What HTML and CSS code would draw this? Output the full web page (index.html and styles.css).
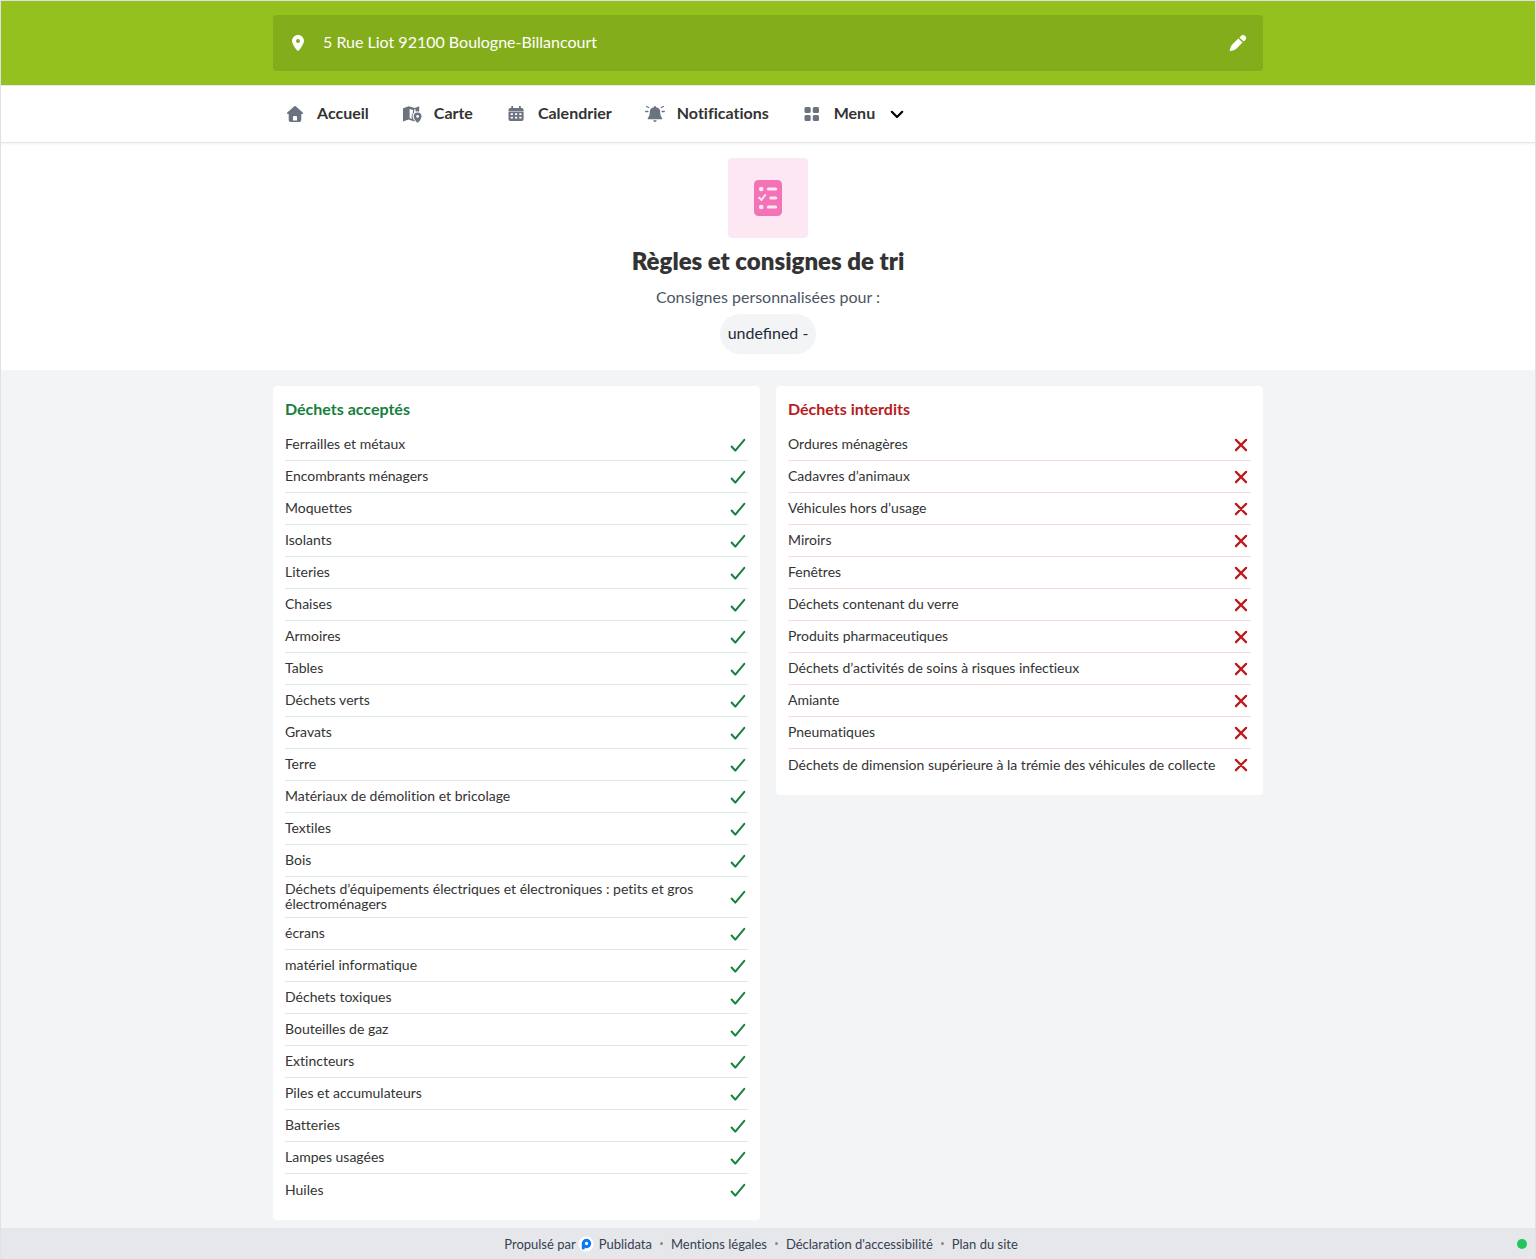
FILE: index.html
```html
<!DOCTYPE html>
<html lang="fr">
<head>
  <meta charset="utf-8">
  <meta name="viewport" content="width=device-width, initial-scale=1">
  <title>Règles et consignes de tri</title>
  <link rel="stylesheet" href="styles.css">
</head>
<body>
  <svg class="sprite" aria-hidden="true">
    <symbol id="check" viewBox="0 0 20 20"><path d="M3.600 11.500 7.300 15.600 16.300 4.800" fill="none" stroke="currentColor" stroke-width="2" stroke-linecap="round" stroke-linejoin="round"/></symbol>
    <symbol id="cross" viewBox="0 0 20 20"><path d="M4.900 4.900 15.100 15.100M15.100 4.900 4.900 15.100" fill="none" stroke="currentColor" stroke-width="2.200" stroke-linecap="round"/></symbol>
  </svg>

  <header class="topbar">
    <button class="address container" type="button">
      <svg class="icon" viewBox="0 0 20 20" aria-hidden="true"><path fill="currentColor" fill-rule="evenodd" transform="translate(4 2) scale(.03125)" d="M215.7 499.2C267 435 384 279.4 384 192C384 86 298 0 192 0S0 86 0 192c0 87.4 117 243 168.3 307.2c12.3 15.3 35.1 15.3 47.4 0zM192 128a64 64 0 1 1 0 128 64 64 0 1 1 0-128z"/></svg>
      <span class="address-text label">5 Rue Liot 92100 Boulogne-Billancourt</span>
      <svg class="icon" viewBox="0 0 20 20" aria-hidden="true"><g fill="currentColor"><path d="M10.400 5.400 14.500 9.500 8.600 15.400C7 17 4.400 17.700 1.700 18.100 2.100 15.500 2.900 12.900 4.500 11.300z"/><path d="M11.400 4.400 12.900 3a2.900 2.900 0 0 1 4.200 0 2.900 2.900 0 0 1 0 4.200L15.600 8.600z"/></g></svg>
    </button>
  </header>

  <nav class="nav">
    <ul class="nav-list container">
      <li><a class="nav-link" href="#">
        <svg class="icon" viewBox="0 0 20 20" aria-hidden="true"><path fill="currentColor" fill-rule="evenodd" d="M9.3 2.3a1 1 0 0 1 1.4 0l7 6.2c.7.6.3 1.5-.6 1.5h-.8v6a2 2 0 0 1-2 2H5.7a2 2 0 0 1-2-2v-6h-.8c-.9 0-1.300-.9-.6-1.500zM8 16.500h4v-3.500a1 1 0 0 0-1-1H9a1 1 0 0 0-1 1z"/></svg>
        <span class="label">Accueil</span></a></li>
      <li><a class="nav-link" href="#">
        <svg class="icon" viewBox="0 0 20 20" aria-hidden="true"><path fill="currentColor" d="M1 4.300 6.700 2.200 12.600 4.100 17.200 2.300V7.700Q15.600 7 13.800 7.700L13.300 4.900 12.300 5.300 12.100 8.500Q10.300 10 10.500 12.400 10.800 14.400 12.700 17L12.300 17.600 6.600 15.500 1 17.500z"/><path fill="#fff" d="M7.600 5 10.900 6V9Q9.400 10.500 9.600 13.200L9.900 14.900 7.600 14z"/><path fill="currentColor" fill-rule="evenodd" d="M15.600 8.500a3.900 3.900 0 0 1 3.900 3.900c0 2-2 4.500-3.200 5.900a.9.9 0 0 1-1.400 0c-1.200-1.400-3.200-3.900-3.200-5.900a3.900 3.900 0 0 1 3.900-3.900zm0 2.500a1.400 1.400 0 1 0 0 2.800 1.400 1.400 0 0 0 0-2.800z"/></svg>
        <span class="label">Carte</span></a></li>
      <li><a class="nav-link" href="#">
        <svg class="icon" viewBox="0 0 20 20" aria-hidden="true"><path fill="currentColor" d="M5.300 2h1.800v2h5.900V2h1.800v2h1a1.800 1.800 0 0 1 1.800 1.800V7H2.500V5.800A1.800 1.800 0 0 1 4.300 4h1zM2.500 7.600h15.100v7.600a1.800 1.800 0 0 1-1.800 1.800H4.300a1.800 1.800 0 0 1-1.800-1.800z"/><path fill="#fff" d="M4.700 9.200h2.200v1.800H4.700zm4.300 0h2.200v1.800H9zm4.300 0h2.200v1.800h-2.200zM4.700 12.800h2.200v1.800H4.700zm4.300 0h2.200v1.800H9zm4.300 0h2.200v1.800h-2.200z"/></svg>
        <span class="label">Calendrier</span></a></li>
      <li><a class="nav-link" href="#">
        <svg class="icon" viewBox="0 0 20 20" aria-hidden="true"><path fill="currentColor" d="M10 2a1 1 0 0 1 1 1v.3a4.800 4.800 0 0 1 4.200 4.700c0 3 .6 4.500 1.900 5.900.5.600.1 1.300-.7 1.300H3.600c-.8 0-1.200-.7-.7-1.300 1.300-1.400 1.900-2.900 1.900-5.900A4.800 4.800 0 0 1 9 3.300V3a1 1 0 0 1 1-1zM8.300 16.300h3.400a1.700 1.700 0 0 1-3.400 0z"/><path fill="none" stroke="currentColor" stroke-width="1.300" stroke-linecap="round" d="M1.600 2.500 3.600 3.500M.7 7.500h2.200M18.400 2.500 16.400 3.500M19.300 7.500h-2.200"/></svg>
        <span class="label">Notifications</span></a></li>
      <li><button class="nav-link" type="button">
        <svg class="icon" viewBox="0 0 20 20" aria-hidden="true"><g fill="currentColor"><rect x="2.500" y="3" width="6.200" height="6" rx="1.500"/><rect x="10.800" y="3" width="6.200" height="6" rx="1.500"/><rect x="2.500" y="11" width="6.200" height="6" rx="1.500"/><rect x="10.800" y="11" width="6.200" height="6" rx="1.500"/></g></svg>
        <span class="label">Menu</span>
        <svg class="icon chevron" viewBox="0 0 20 20" aria-hidden="true"><path d="M4.800 7.800 10 13 15.200 7.800" fill="none" stroke="currentColor" stroke-width="2.200" stroke-linecap="round" stroke-linejoin="round"/></svg>
      </button></li>
    </ul>
  </nav>

  <main class="main">
    <section class="hero">
      <div class="hero-icon">
        <svg viewBox="0 0 28 38" aria-hidden="true"><rect x="0" y="1" width="28" height="36" rx="4.500" fill="#f472b6"/><g fill="#fce7f3"><circle cx="7.200" cy="10" r="2.300"/><circle cx="7.200" cy="28" r="2.300"/><rect x="12.800" y="8.500" width="10.400" height="3.100" rx="1.500"/><rect x="15.300" y="17.500" width="7.900" height="3.100" rx="1.500"/><rect x="12.800" y="26.500" width="10.400" height="3.100" rx="1.500"/></g><path d="M5.200 18.800 7.500 21 11.200 16" fill="none" stroke="#fce7f3" stroke-width="2" stroke-linecap="round" stroke-linejoin="round"/></svg>
      </div>
      <h1 class="title">Règles et consignes de tri</h1>
      <p class="subtitle">Consignes personnalisées pour :</p>
      <p class="pill">undefined -</p>
    </section>

    <div class="cards container">
      <section class="card accepted">
        <h2 class="card-title">Déchets acceptés</h2>
        <ul class="list">
          <li class="row"><span class="label">Ferrailles et métaux</span><svg class="icon"><use href="#check"/></svg></li>
          <li class="row"><span class="label">Encombrants ménagers</span><svg class="icon"><use href="#check"/></svg></li>
          <li class="row"><span class="label">Moquettes</span><svg class="icon"><use href="#check"/></svg></li>
          <li class="row"><span class="label">Isolants</span><svg class="icon"><use href="#check"/></svg></li>
          <li class="row"><span class="label">Literies</span><svg class="icon"><use href="#check"/></svg></li>
          <li class="row"><span class="label">Chaises</span><svg class="icon"><use href="#check"/></svg></li>
          <li class="row"><span class="label">Armoires</span><svg class="icon"><use href="#check"/></svg></li>
          <li class="row"><span class="label">Tables</span><svg class="icon"><use href="#check"/></svg></li>
          <li class="row"><span class="label">Déchets verts</span><svg class="icon"><use href="#check"/></svg></li>
          <li class="row"><span class="label">Gravats</span><svg class="icon"><use href="#check"/></svg></li>
          <li class="row"><span class="label">Terre</span><svg class="icon"><use href="#check"/></svg></li>
          <li class="row"><span class="label">Matériaux de démolition et bricolage</span><svg class="icon"><use href="#check"/></svg></li>
          <li class="row"><span class="label">Textiles</span><svg class="icon"><use href="#check"/></svg></li>
          <li class="row"><span class="label">Bois</span><svg class="icon"><use href="#check"/></svg></li>
          <li class="row"><span class="label">Déchets d’équipements électriques et électroniques : petits et gros électroménagers</span><svg class="icon"><use href="#check"/></svg></li>
          <li class="row"><span class="label">écrans</span><svg class="icon"><use href="#check"/></svg></li>
          <li class="row"><span class="label">matériel informatique</span><svg class="icon"><use href="#check"/></svg></li>
          <li class="row"><span class="label">Déchets toxiques</span><svg class="icon"><use href="#check"/></svg></li>
          <li class="row"><span class="label">Bouteilles de gaz</span><svg class="icon"><use href="#check"/></svg></li>
          <li class="row"><span class="label">Extincteurs</span><svg class="icon"><use href="#check"/></svg></li>
          <li class="row"><span class="label">Piles et accumulateurs</span><svg class="icon"><use href="#check"/></svg></li>
          <li class="row"><span class="label">Batteries</span><svg class="icon"><use href="#check"/></svg></li>
          <li class="row"><span class="label">Lampes usagées</span><svg class="icon"><use href="#check"/></svg></li>
          <li class="row"><span class="label">Huiles</span><svg class="icon"><use href="#check"/></svg></li>
        </ul>
      </section>

      <section class="card refused">
        <h2 class="card-title">Déchets interdits</h2>
        <ul class="list">
          <li class="row"><span class="label">Ordures ménagères</span><svg class="icon"><use href="#cross"/></svg></li>
          <li class="row"><span class="label">Cadavres d’animaux</span><svg class="icon"><use href="#cross"/></svg></li>
          <li class="row"><span class="label">Véhicules hors d’usage</span><svg class="icon"><use href="#cross"/></svg></li>
          <li class="row"><span class="label">Miroirs</span><svg class="icon"><use href="#cross"/></svg></li>
          <li class="row"><span class="label">Fenêtres</span><svg class="icon"><use href="#cross"/></svg></li>
          <li class="row"><span class="label">Déchets contenant du verre</span><svg class="icon"><use href="#cross"/></svg></li>
          <li class="row"><span class="label">Produits pharmaceutiques</span><svg class="icon"><use href="#cross"/></svg></li>
          <li class="row"><span class="label">Déchets d’activités de soins à risques infectieux</span><svg class="icon"><use href="#cross"/></svg></li>
          <li class="row"><span class="label">Amiante</span><svg class="icon"><use href="#cross"/></svg></li>
          <li class="row"><span class="label">Pneumatiques</span><svg class="icon"><use href="#cross"/></svg></li>
          <li class="row"><span class="label">Déchets de dimension supérieure à la trémie des véhicules de collecte</span><svg class="icon"><use href="#cross"/></svg></li>
        </ul>
      </section>
    </div>
  </main>

  <footer class="footer">
    <div class="footer-links">
      <a class="brand" href="#">Propulsé par
        <svg class="logo" viewBox="0 0 20 20" aria-hidden="true"><circle cx="10" cy="10" r="7.500" fill="#fff"/><circle cx="10.500" cy="9.500" r="3.200" fill="none" stroke="#0a78f5" stroke-width="3"/><path d="M5.800 9.500H8.800V13.500A1.500 1.500 0 0 1 5.800 14.500z" fill="#0a78f5"/></svg>
        Publidata</a>
      <span class="dot"></span>
      <a href="#">Mentions légales</a>
      <span class="dot"></span>
      <a href="#">Déclaration d'accessibilité</a>
      <span class="dot"></span>
      <a href="#">Plan du site</a>
    </div>
    <span class="status" role="status" aria-label="En ligne"></span>
  </footer>
</body>
</html>
```
FILE: styles.css
```css
*,
*::before,
*::after {
  box-sizing: border-box;
}

body {
  margin: 0;
  min-height: 100vh;
  display: flex;
  flex-direction: column;
  border: 1px solid #dfe1e5;
  border-bottom: 0;
  background: #f3f4f6;
  color: #333;
  font-family: Lato, "Liberation Sans", sans-serif;
  font-size: 16px;
  font-variant-ligatures: none;
  line-height: 24px;
}

h1,
h2,
p,
ul {
  margin: 0;
  padding: 0;
}

ul {
  list-style: none;
}

a {
  color: inherit;
  text-decoration: none;
}

button {
  border: 0;
  padding: 0;
  background: none;
  color: inherit;
  font: inherit;
  cursor: pointer;
}

.sprite {
  display: none;
}

.icon {
  width: 20px;
  height: 20px;
  flex: none;
}

/* Lifts text so that it centres optically beside an icon */
.label {
  padding-bottom: 2px;
}

.container {
  width: 100%;
  max-width: 990px;
  margin: 0 auto;
}

.topbar {
  padding: 14px 16px;
  background: #95c11f;
}

.address {
  display: flex;
  align-items: center;
  gap: 15px;
  height: 56px;
  padding: 0 15px;
  border-radius: 4px;
  background: #84ad1b;
  color: #fff;
  text-align: left;
}

.address-text {
  flex: 1;
}

.nav {
  position: relative;
  border-top: 1px solid #e5e7eb;
  background: #fff;
  box-shadow: 0 1px 0 #e5e7eb, 0 2px 2px rgba(0, 0, 0, 0.05);
}

.nav-list {
  display: flex;
  flex-wrap: wrap;
  gap: 0 33px;
  padding: 0 12px;
}

.nav-link {
  display: flex;
  align-items: center;
  gap: 12px;
  height: 56px;
  font-weight: 700;
}

.nav-link .icon {
  color: #6b7280;
}

.nav-link .chevron {
  color: #000;
}

.main {
  flex: 1;
}

.hero {
  display: flex;
  flex-direction: column;
  align-items: center;
  padding: 16px;
  background: #fff;
  text-align: center;
}

.hero-icon {
  display: grid;
  place-items: center;
  width: 80px;
  height: 80px;
  margin: 0 0 7px;
  border-radius: 4px;
  background: #fce7f3;
}

.hero-icon svg {
  width: 28px;
  height: 38px;
}

.title {
  margin: 0 0 8px;
  font-size: 24px;
  font-weight: 800;
  line-height: 32px;
}

.subtitle {
  margin: 0 0 5px;
  color: #4b5563;
}

.pill {
  padding: 7px 8px 9px;
  border-radius: 20px;
  background: #f3f4f6;
  color: #1f2937;
  font-variant-ligatures: normal;
}

.cards {
  display: grid;
  grid-template-columns: repeat(auto-fit, minmax(320px, 1fr));
  align-items: start;
  gap: 16px;
  padding: 16px 0 8px;
}

.card {
  padding: 11px 12px 14px;
  border-radius: 4px;
  background: #fff;
}

.card-title {
  margin: 0 0 8px;
  font-size: 16px;
  font-weight: 700;
  line-height: 24px;
}

.accepted .card-title,
.accepted .icon {
  color: #15803d;
}

.refused .card-title,
.refused .icon {
  color: #b91c1c;
}

.row {
  display: flex;
  align-items: center;
  justify-content: space-between;
  gap: 8px;
  min-height: 32px;
  padding: 4px 0;
  border-bottom: 1px solid #d9ebe3;
  font-size: 14px;
  line-height: 15px;
}

.refused .row {
  border-color: #f8dada;
}

.list .row:last-child {
  border-bottom: 0;
}

.footer {
  display: flex;
  align-items: center;
  gap: 4px;
  min-height: 31px;
  padding: 0 8px;
  background: #e5e7eb;
  color: #374151;
  font-size: 13px;
  line-height: 20px;
}

.footer-links {
  display: flex;
  flex: 1;
  flex-wrap: wrap;
  align-items: center;
  justify-content: center;
  gap: 0 8px;
}

.brand {
  display: flex;
  align-items: center;
}

.logo {
  width: 20px;
  height: 20px;
  margin: 0 3px 0 0;
}

.dot {
  width: 3px;
  height: 3px;
  border-radius: 50%;
  background: #8b8b8b;
}

.status {
  width: 10px;
  height: 10px;
  border-radius: 50%;
  background: #22c55e;
}
```
